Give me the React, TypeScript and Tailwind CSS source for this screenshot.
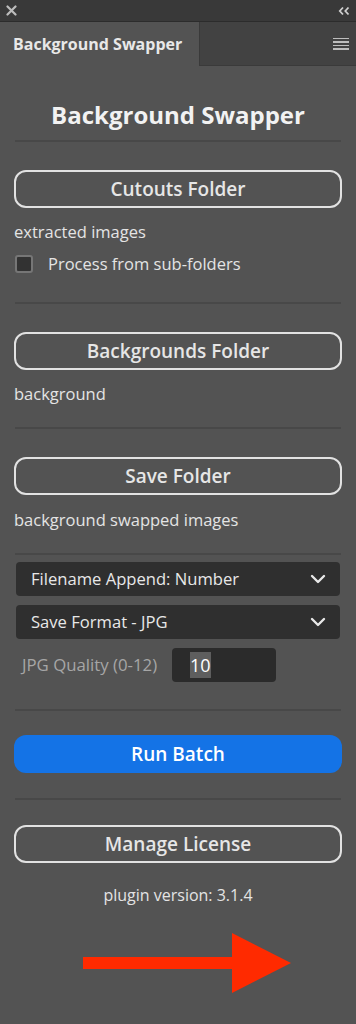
import React from "react";

const font = { fontFamily: '"Open Sans", "Noto Sans", sans-serif' };

function Divider() {
  return <div className="mx-[15px] h-[2px] bg-[#484848]" />;
}

function OutlineButton({ label }: { label: string }) {
  return (
    <div className="mx-[14px] flex h-[38px] items-center justify-center rounded-[12px] border-[2.5px] border-[#e2e2e2] text-[19px] font-semibold text-[#e6e6e6]">
      {label}
    </div>
  );
}

function Chevron() {
  return (
    <svg width="16" height="10" viewBox="0 0 16 10" fill="none">
      <path d="M2 2 L8 8 L14 2" stroke="#e8e8e8" strokeWidth="2.4" strokeLinecap="round" strokeLinejoin="round" />
    </svg>
  );
}

function Select({ label }: { label: string }) {
  return (
    <div className="mx-[16px] flex h-[34px] items-center justify-between rounded-[4px] bg-[#2f2f2f] pl-[15px] pr-[14px] text-[16.6px] text-[#e8e8e8]">
      <span>{label}</span>
      <Chevron />
    </div>
  );
}

export default function App() {
  return (
    <div style={font} className="flex h-[1024px] w-[356px] flex-col overflow-hidden bg-[#535353]">
      {/* top bar */}
      <div className="flex h-[22px] items-center justify-between border-b border-[#2c2c2c] bg-[#393939] pl-[6px] pr-[6px]">
        <svg width="11" height="11" viewBox="0 0 11 11">
          <path d="M1.5 1.5 L9.5 9.5 M9.5 1.5 L1.5 9.5" stroke="#bdbdbd" strokeWidth="2.2" strokeLinecap="round" />
        </svg>
        <svg width="12" height="10" viewBox="0 0 12 10">
          <path d="M5 1.5 L1.8 5 L5 8.5 M10.5 1.5 L7.3 5 L10.5 8.5" stroke="#d0d0d0" strokeWidth="1.8" fill="none" />
        </svg>
      </div>
      {/* tab row */}
      <div className="flex h-[44px]">
        <div className="flex w-[200px] items-center border-r border-[#3a3a3a] bg-[#535353] pl-[13px] text-[16px] font-bold text-[#e8e8e8]">
          Background Swapper
        </div>
        <div className="flex flex-1 items-center justify-end border-b border-[#3a3a3a] bg-[#424242] pr-[7px]">
          <div className="flex flex-col gap-[2px]">
            <div className="h-[1.5px] w-[16px] bg-[#bdbdbd]" />
            <div className="h-[1.5px] w-[16px] bg-[#bdbdbd]" />
            <div className="h-[1.5px] w-[16px] bg-[#bdbdbd]" />
            <div className="h-[1.5px] w-[16px] bg-[#bdbdbd]" />
          </div>
        </div>
      </div>

      <div className="pt-[33px] text-center text-[24px] font-bold leading-[32px] text-[#f2f2f2]">
        Background Swapper
      </div>
      <div className="mt-[9px]">
        <Divider />
      </div>

      <div className="mt-[28px]">
        <OutlineButton label="Cutouts Folder" />
      </div>
      <div className="mt-[13px] pl-[14px] text-[16.5px] leading-[22px] text-[#e4e4e4]">extracted images</div>
      <div className="mt-[10px] flex items-center pl-[15px]">
        <div className="h-[18px] w-[18px] rounded-[3px] border-2 border-[#767676] bg-[#323232]" />
        <span className="ml-[15px] text-[16.5px] leading-[22px] text-[#e4e4e4]">Process from sub-folders</span>
      </div>
      <div className="mt-[27px]">
        <Divider />
      </div>

      <div className="mt-[28px]">
        <OutlineButton label="Backgrounds Folder" />
      </div>
      <div className="mt-[13px] pl-[14px] text-[16.5px] leading-[22px] text-[#e4e4e4]">background</div>
      <div className="mt-[22px]">
        <Divider />
      </div>

      <div className="mt-[28px]">
        <OutlineButton label="Save Folder" />
      </div>
      <div className="mt-[14px] pl-[14px] text-[16.5px] leading-[22px] text-[#e4e4e4]">background swapped images</div>
      <div className="mt-[22px]">
        <Divider />
      </div>

      <div className="mt-[7px]">
        <Select label="Filename Append: Number" />
      </div>
      <div className="mt-[9px]">
        <Select label="Save Format - JPG" />
      </div>
      <div className="mt-[9px] flex items-center pl-[22px]">
        <span className="w-[150px] text-[16.8px] text-[#a6a6a6]">JPG Quality (0-12)</span>
        <div className="flex h-[34px] w-[104px] items-center rounded-[4px] bg-[#2b2b2b] pl-[18px]">
          <span className="bg-[#5e5e5e] text-[18px] leading-[26px] text-white">10</span>
        </div>
      </div>
      <div className="mt-[27px]">
        <Divider />
      </div>

      <div className="mx-[14px] mt-[24px] flex h-[38px] items-center justify-center rounded-[12px] bg-[#1473e6] text-[19px] font-semibold text-white">
        Run Batch
      </div>
      <div className="mt-[25px]">
        <Divider />
      </div>

      <div className="mt-[25px]">
        <OutlineButton label="Manage License" />
      </div>
      <div className="mt-[21px] text-center text-[16px] leading-[22px] text-[#e4e4e4]">plugin version: 3.1.4</div>

      <div className="mt-[27px] flex pl-[83px]">
        <svg width="210" height="60" viewBox="0 0 210 60">
          <rect x="0" y="24" width="152" height="12" fill="#ff2a00" />
          <polygon points="149,0 208,30 149,60" fill="#ff2a00" />
        </svg>
      </div>
    </div>
  );
}
